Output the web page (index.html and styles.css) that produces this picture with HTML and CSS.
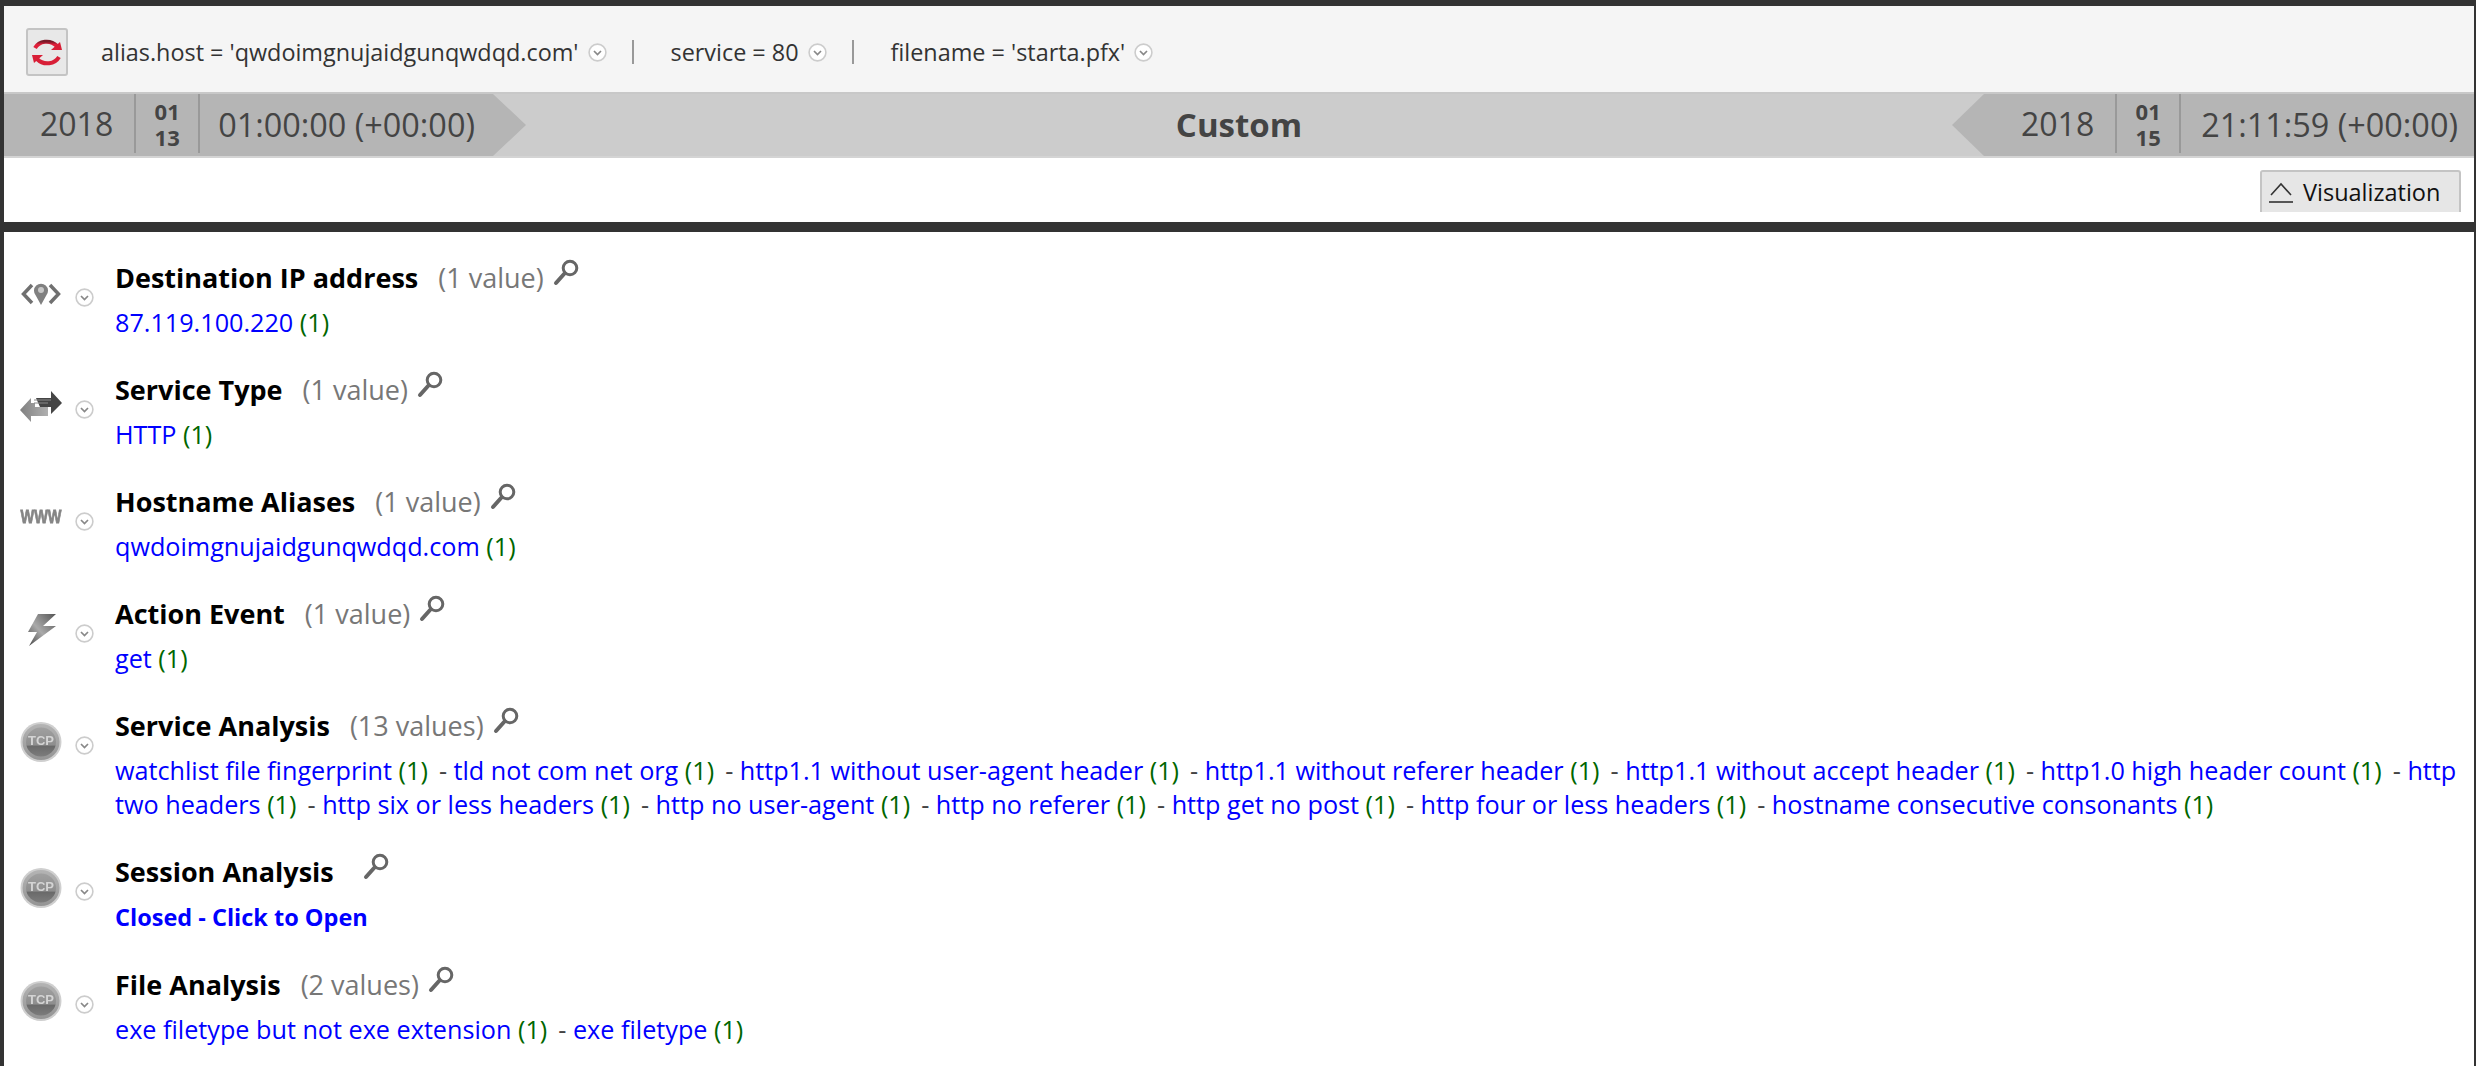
FILE: index.html
```html
<!DOCTYPE html>
<html lang="en">
<head>
<meta charset="utf-8">
<title>Investigation</title>
<link rel="stylesheet" href="styles.css">
</head>
<body>
<svg class="defs" width="0" height="0" aria-hidden="true">
  <defs>
    <linearGradient id="g-bolt" x1="1" y1="0" x2="0" y2="1">
      <stop offset="0" stop-color="#555"/><stop offset=".55" stop-color="#aaa"/><stop offset="1" stop-color="#444"/>
    </linearGradient>
    <linearGradient id="g-ring" x1="0" y1="0" x2="0" y2="1">
      <stop offset="0" stop-color="#b4b4b4"/><stop offset="1" stop-color="#949494"/>
    </linearGradient>
    <linearGradient id="g-inner" x1="0" y1="0" x2="0" y2="1">
      <stop offset="0" stop-color="#a0a0a0"/><stop offset=".6" stop-color="#8e8e8e"/><stop offset=".65" stop-color="#6a6a6a"/><stop offset="1" stop-color="#7c7c7c"/>
    </linearGradient>
    <linearGradient id="g-left" x1="0" y1="0" x2="1" y2="0">
      <stop offset="0" stop-color="#808080"/><stop offset="1" stop-color="#b0b0b0"/>
    </linearGradient>
    <linearGradient id="g-red" x1="0" y1="0" x2="0" y2="1">
      <stop offset="0" stop-color="#7a1a28"/><stop offset=".45" stop-color="#e01f3a"/><stop offset="1" stop-color="#e01f3a"/>
    </linearGradient>
    <symbol id="i-chev" viewBox="0 0 19 19">
      <circle cx="9.5" cy="9.5" r="8.4" fill="#fff" stroke="#ccc" stroke-width="1.6"/>
      <path d="M6 8l3.5 3.5L13 8" fill="none" stroke="#888" stroke-width="1.7"/>
    </symbol>
    <symbol id="i-search" viewBox="0 0 26 27">
      <circle cx="17" cy="9" r="6.8" fill="#fff" stroke="#666" stroke-width="3"/>
      <path d="M11.5 14.5L3 24" stroke="#666" stroke-width="4" stroke-linecap="round"/>
    </symbol>
    <symbol id="i-ring" viewBox="0 0 42 40">
      <ellipse cx="21" cy="20" rx="20.5" ry="20" fill="#cfcfcf"/>
      <ellipse cx="21" cy="20" rx="18.5" ry="18" fill="url(#g-ring)"/>
      <ellipse cx="21" cy="20" rx="15" ry="14.5" fill="url(#g-inner)"/>
      <text x="21" y="23" class="ring-text" text-anchor="middle">TCP</text>
    </symbol>
  </defs>
</svg>

<div class="page">
  <header class="head">
    <div class="filters">
      <button class="refresh" type="button" aria-label="Refresh">
        <svg width="30" height="27" viewBox="0 0 30 27">
          <path d="M3 9C7 2 18 0 25 7" fill="none" stroke="url(#g-red)" stroke-width="4"/>
          <path d="M30 11H19L28 3z" fill="#d81e36"/>
          <g transform="rotate(180 15 13.5)">
            <path d="M3 9C7 2 18 0 25 7" fill="none" stroke="#d81e36" stroke-width="4"/>
            <path d="M30 11H19L28 3z" fill="#d81e36"/>
          </g>
        </svg>
      </button>
      <span class="filter">alias.host = 'qwdoimgnujaidgunqwdqd.com'<svg class="fchev"><use href="#i-chev"/></svg></span>
      <span class="filter-sep"></span>
      <span class="filter">service = 80<svg class="fchev"><use href="#i-chev"/></svg></span>
      <span class="filter-sep"></span>
      <span class="filter">filename = 'starta.pfx'<svg class="fchev"><use href="#i-chev"/></svg></span>
    </div>
    <div class="timebar">
      <div class="stamp stamp-start">
        <span class="year">2018</span>
        <span class="date">01<br>13</span>
        <span class="time">01:00:00 (+00:00)</span>
      </div>
      <div class="range">Custom</div>
      <div class="stamp stamp-end">
        <span class="year">2018</span>
        <span class="date">01<br>15</span>
        <span class="time">21:11:59 (+00:00)</span>
      </div>
    </div>
    <div class="viz-row">
      <button class="viz" type="button">
        <svg width="24" height="21" viewBox="0 0 24 21"><path d="M2 13L12 2l10 11" fill="none" stroke="#333" stroke-width="1.6"/><path d="M0 20h24" stroke="#333" stroke-width="1.6"/></svg>
        Visualization
      </button>
    </div>
  </header>

  <main class="results">
    <section class="row">
      <div class="ricon">
        <svg width="42" height="24" viewBox="0 0 42 24">
          <path d="M12 3L3.500 12l8.500 9M30 3l8.500 9L30 21" fill="none" stroke="#707070" stroke-width="3.500"/>
          <path d="M21 23L15.500 13A7 7 0 1 1 26.500 13z" fill="#808080"/>
          <circle cx="21" cy="8" r="3" fill="#c8c8c8"/>
        </svg>
      </div>
      <svg class="rchev"><use href="#i-chev"/></svg>
      <div class="body">
        <div class="title"><b>Destination IP address</b><span class="count">(1 value)</span><svg class="search"><use href="#i-search"/></svg></div>
        <div class="vals"><a>87.119.100.220</a> <i>(1)</i></div>
      </div>
    </section>

    <section class="row">
      <div class="ricon">
        <svg width="42" height="31" viewBox="0 0 42 31">
          <path d="M0 19L11 7v5h17v13H11v6z" fill="url(#g-left)"/>
          <path d="M15 8h15V0l12 12-12 11v-7H15z" fill="#fff"/>
          <path d="M16 7h15V0l11 12-11 11v-7H20z" fill="#454545"/>
          <path d="M14 12h14M14 9h17" stroke="#8a8a8a" stroke-width="1"/>
        </svg>
      </div>
      <svg class="rchev"><use href="#i-chev"/></svg>
      <div class="body">
        <div class="title"><b>Service Type</b><span class="count">(1 value)</span><svg class="search"><use href="#i-search"/></svg></div>
        <div class="vals"><a>HTTP</a> <i>(1)</i></div>
      </div>
    </section>

    <section class="row">
      <div class="ricon">
        <svg class="www-icon" width="42" height="15" viewBox="0 0 42 15"><text x="21" y="11" transform="translate(0 -1.500) scale(1 1.250)" class="www" text-anchor="middle">WWW</text></svg>
      </div>
      <svg class="rchev"><use href="#i-chev"/></svg>
      <div class="body">
        <div class="title"><b>Hostname Aliases</b><span class="count">(1 value)</span><svg class="search"><use href="#i-search"/></svg></div>
        <div class="vals"><a>qwdoimgnujaidgunqwdqd.com</a> <i>(1)</i></div>
      </div>
    </section>

    <section class="row">
      <div class="ricon">
        <svg width="30" height="32" viewBox="0 0 30 32"><path d="M30 0H12L2 18h9L3 32l27-20H17z" fill="url(#g-bolt)"/></svg>
      </div>
      <svg class="rchev"><use href="#i-chev"/></svg>
      <div class="body">
        <div class="title"><b>Action Event</b><span class="count">(1 value)</span><svg class="search"><use href="#i-search"/></svg></div>
        <div class="vals"><a>get</a> <i>(1)</i></div>
      </div>
    </section>

    <section class="row">
      <div class="ricon"><svg class="ring"><use href="#i-ring"/></svg></div>
      <svg class="rchev"><use href="#i-chev"/></svg>
      <div class="body">
        <div class="title"><b>Service Analysis</b><span class="count">(13 values)</span><svg class="search"><use href="#i-search"/></svg></div>
        <div class="vals"><a>watchlist file fingerprint</a> <i>(1)</i> <span class="dash">-</span> <a>tld not com net org</a> <i>(1)</i> <span class="dash">-</span> <a>http1.1 without user-agent header</a> <i>(1)</i> <span class="dash">-</span> <a>http1.1 without referer header</a> <i>(1)</i> <span class="dash">-</span> <a>http1.1 without accept header</a> <i>(1)</i> <span class="dash">-</span> <a>http1.0 high header count</a> <i>(1)</i> <span class="dash">-</span> <a>http two headers</a> <i>(1)</i> <span class="dash">-</span> <a>http six or less headers</a> <i>(1)</i> <span class="dash">-</span> <a>http no user-agent</a> <i>(1)</i> <span class="dash">-</span> <a>http no referer</a> <i>(1)</i> <span class="dash">-</span> <a>http get no post</a> <i>(1)</i> <span class="dash">-</span> <a>http four or less headers</a> <i>(1)</i> <span class="dash">-</span> <a>hostname consecutive consonants</a> <i>(1)</i></div>
      </div>
    </section>

    <section class="row">
      <div class="ricon"><svg class="ring"><use href="#i-ring"/></svg></div>
      <svg class="rchev"><use href="#i-chev"/></svg>
      <div class="body">
        <div class="title"><b>Session Analysis</b><span class="count"></span><svg class="search"><use href="#i-search"/></svg></div>
        <div class="vals"><a class="open">Closed - Click to Open</a></div>
      </div>
    </section>

    <section class="row">
      <div class="ricon"><svg class="ring"><use href="#i-ring"/></svg></div>
      <svg class="rchev"><use href="#i-chev"/></svg>
      <div class="body">
        <div class="title"><b>File Analysis</b><span class="count">(2 values)</span><svg class="search"><use href="#i-search"/></svg></div>
        <div class="vals"><a>exe filetype but not exe extension</a> <i>(1)</i> <span class="dash">-</span> <a>exe filetype</a> <i>(1)</i></div>
      </div>
    </section>
  </main>
</div>
</body>
</html>
```
FILE: styles.css
```css
* { box-sizing: border-box; }
html, body { margin: 0; height: 100%; }
body {
  background: #333;
  font-family: "Open Sans", "Liberation Sans", sans-serif;
  color: #333;
  overflow: hidden;
}
.defs { position: absolute; }
.page { padding: 6px 2px 0 4px; height: 1066px; display: flex; flex-direction: column; }

.head { background: #fff; height: 216px; flex: none; }
.filters {
  height: 86px;
  background: #f5f5f5;
  display: flex;
  align-items: center;
  padding: 22px 0 16px 22px;
  font-size: 23.4px;
  color: #333;
}
.refresh {
  width: 42px; height: 48px; padding: 0;
  background: #e8e8e8;
  border: 2px solid #c4c4c4;
  border-radius: 3px;
  display: flex; align-items: center; justify-content: center;
  margin-right: 33px;
}
.filter { display: inline-flex; align-items: center; }
.fchev { width: 19px; height: 19px; margin-left: 9px; }
.filter-sep { width: 2px; height: 24px; background: #999; margin: 0 37px 0 25px; }

.timebar {
  height: 66px;
  border-top: 2px solid #c8c8c8;
  border-bottom: 2px solid #d4d4d4;
  background: #ccc;
  display: flex;
  color: #444;
}
.range { flex: 1; text-align: center; font-size: 33px; font-weight: 700; line-height: 62px; color: #444; }
.stamp {
  width: 522px;
  background: #b5b5b5;
  display: flex;
  align-items: stretch;
}
.stamp-start { clip-path: polygon(0 0, 489px 0, 100% 50%, 489px 100%, 0 100%); }
.stamp-end { clip-path: polygon(32px 0, 100% 0, 100% 100%, 32px 100%, 0 50%); padding-left: 69px; }
.stamp-start .year { padding-left: 36px; }
.year, .time { font-size: 32px; line-height: 60px; height: 59px; }
.year { padding-right: 21px; border-right: 2px solid #999; }
.date {
  width: 64px; height: 59px;
  font-size: 22px; font-weight: 700; line-height: 26px;
  padding-top: 4px;
  text-align: center;
  border-right: 2px solid #999;
}
.time { padding-left: 18px; white-space: nowrap; font-size: 32.4px; }
.stamp-end .time { padding-left: 20px; }

.viz-row { height: 64px; display: flex; justify-content: flex-end; padding: 12px 13px 0 0; }
.viz {
  width: 201px; height: 42px;
  background: #e6e6e6;
  border: 2px solid #c4c4c4;
  border-bottom: 0;
  border-radius: 3px 3px 0 0;
  font-family: inherit;
  font-size: 23.5px;
  color: #111;
  display: flex; align-items: center;
  padding: 0 0 0 7px;
  gap: 10px;
}

.results {
  margin-top: 10px;
  flex: 1;
  background: #fff;
  padding: 23px 0 0 16px;
}
.row { display: flex; align-items: flex-start; margin-bottom: 28px; }
.ricon {
  width: 42px; height: 44px;
  margin-top: 17px;
  flex: none;
  display: flex; align-items: center; justify-content: center;
  filter: blur(0.5px);
}
.rchev { width: 19px; height: 19px; flex: none; margin: 33px 21px 0 13px; }
.ring { width: 42px; height: 40px; }
.ring-text { font: 700 13px "Liberation Sans", sans-serif; fill: #d4d4d4; }
.www { font: 700 14.500px "Liberation Sans", sans-serif; fill: #858585; stroke: #858585; stroke-width: 0.6px; }
.www-icon { overflow: visible; }
.body { flex: 1; min-width: 0; }
.title { height: 44px; display: flex; align-items: center; font-size: 27px; color: #000; margin-bottom: 6px; }
.title b { font-weight: 700; margin-right: 20px; }
.count { color: #777; margin-right: 9px; }
.search { width: 26px; height: 27px; margin-top: -9px; flex: none; }
.vals { font-size: 25.2px; line-height: 34px; color: #444; padding-right: 4px; }
.vals a { color: #00f; }
.vals i { font-style: normal; color: #060; }
.vals .dash { margin-left: 4.5px; }
.vals .open { font-weight: 700; font-size: 23.5px; }
```
